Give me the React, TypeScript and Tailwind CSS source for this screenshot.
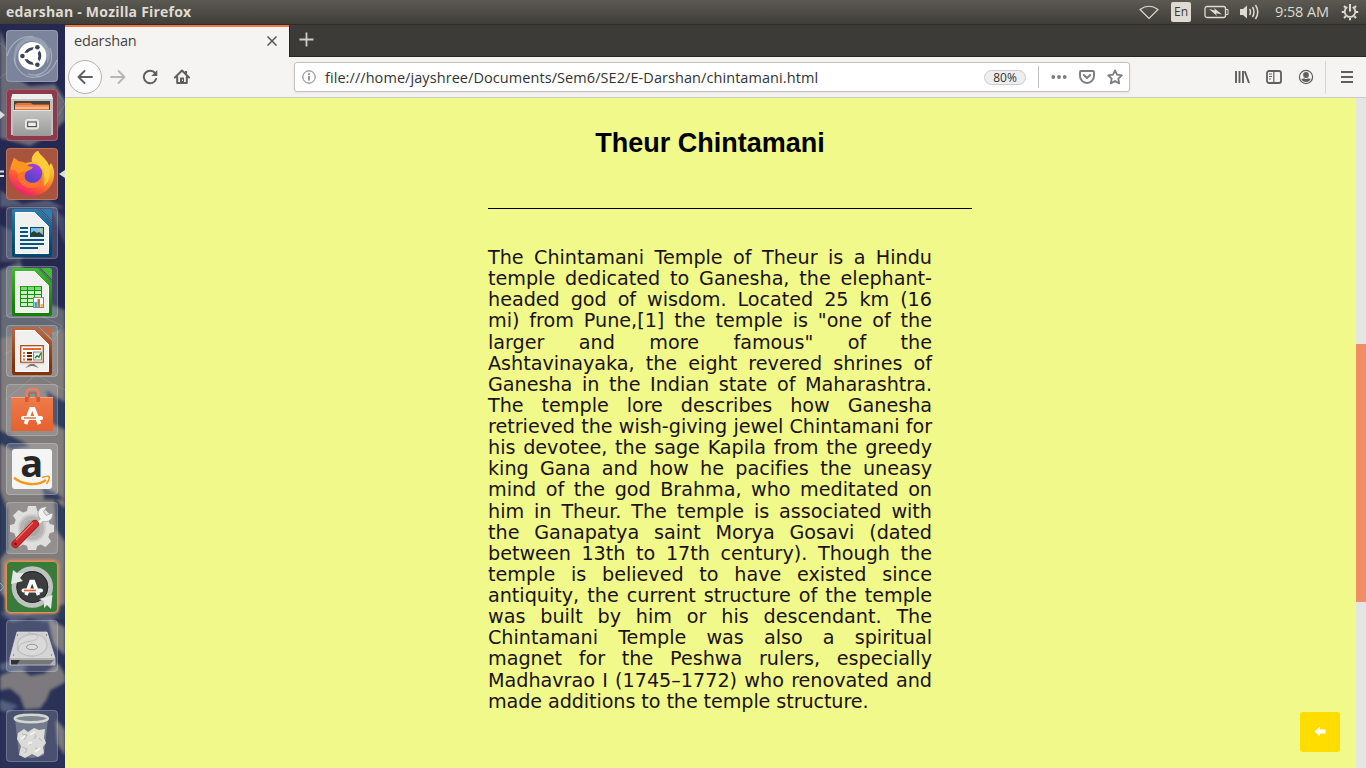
import React from "react";

const uiFont = "font-['Open_Sans','Noto_Sans',sans-serif]";

function Tile({ className, children }: { className: string; children: React.ReactNode }) {
  return (
    <div className={`h-[52px] w-[52px] shrink-0 rounded-[4px] ${className}`}>
      <svg className="overflow-visible" width="52" height="52" viewBox="0 0 52 52" fill="none">
        <rect x=".5" y=".5" width="51" height="51" rx="3.5" stroke="#fff" strokeOpacity=".2" />
        {children}
      </svg>
    </div>
  );
}

function Wallpaper() {
  return (
    <svg className="absolute inset-0" width="65" height="744" viewBox="0 24 65 744" preserveAspectRatio="none">
      <defs>
        <filter id="soft"><feGaussianBlur stdDeviation="1.4" /></filter>
      </defs>
      <rect y="24" width="65" height="744" fill="#25284f" />
      <g filter="url(#soft)">
        <path d="M0 30L8 50L15 78L30 86L55 84L65 100V120L50 135L30 146L0 138Z" fill="#676a78" />
        <path d="M0 190L22 204L48 200L65 208L0 207Z" fill="#535a74" />
        <path d="M0 225L30 240L20 262L0 262ZM50 205L65 218V245Z" fill="#454c69" />
        <path d="M0 270L20 262L38 300L65 310V345L0 350Z" fill="#646974" />
        <path d="M0 338L65 330V620H0Z" fill="#807b7c" />
        <path d="M0 430L20 440L30 446L12 450L0 444ZM46 390L65 402V430L52 424ZM0 490L8 510V550L0 560ZM54 498L65 508V542L56 530ZM0 592L25 614L65 604V625H0ZM42 486L58 494L65 500L44 500Z" fill="#2e3d5b" />
        <path d="M0 618H65V768H0Z" fill="#2b3359" />
        <path d="M0 676L20 668L30 676L44 674L58 664L65 675V682L50 690L46 700L40 708L25 709L20 696L10 688L0 690ZM48 618L65 628V655L54 644ZM56 720L65 730V755L58 744Z" fill="#7b7a7f" />
        <path d="M0 664L16 660L28 668L14 671L0 670ZM0 612L12 622L30 618L46 622L60 616M30 672L62 686M0 700L18 706L8 712L0 710Z" fill="#536080" />
      </g>
      <path d="M0 43L20 62L0 78M56 90L65 104L54 123M3 317L24 307L62 326M62 326L30 380M4 354L62 330M5 400L36 375L65 390" stroke="#b0b4bd" strokeWidth=".6" opacity=".45" fill="none" />
    </svg>
  );
}

function DocBase({ id, edge, light }: { id: string; edge: string; light: string }) {
  return (
    <>
      <defs><linearGradient id={id} x1="0" y1="0" x2="0" y2="1"><stop stopColor={light} /><stop offset=".8" stopColor={edge} /></linearGradient></defs>
      <path d="M8 2H32L46 16V48Q46 50 44 50H8Q6 50 6 48V4Q6 2 8 2Z" fill={`url(#${id})`} />
      <path d="M9.5 5.5H28.5L42.5 19.5V46.5H9.5Z" fill="#f0f0ef" stroke="#fff" />
      <path d="M34.5 2H44Q46 2 46 4V13.5Z" fill={light} />
      <path d="M33 2L46 15" stroke="#fff" strokeOpacity=".22" strokeWidth="1" />
    </>
  );
}

function Launcher() {
  return (
    <aside className="relative w-[65px] shrink-0 overflow-hidden">
      <Wallpaper />
      <div className="relative flex h-full flex-col items-start gap-[7px] pl-[6px] pt-[6px]">
        <Tile className="bg-[#7c849b]">
          <path d="M10 37C2 18 17 2 33 8C44 13 47 26 41 34C42 22 35 12 26 11C15 11 8 22 10 37Z" fill="#b0b6c6" opacity=".55" />
          <path d="M22 44C37 49 50 35 44 18M33 46C22 51 10 42 8 28M1 26C5 12 16 5 28 7M51 30C45 44 34 50 20 46" stroke="#b7bdcb" strokeWidth="1.2" opacity=".7" />
          <circle cx="26.3" cy="26" r="14" fill="#fff" />
          <circle cx="26.6" cy="26" r="7.2" stroke="#3b4354" strokeWidth="3" />
          <path d="M26.6 26L31 18.2M26.6 26L31 33.8M26.6 26H17" stroke="#fff" strokeWidth="6.4" />
          <circle cx="26.6" cy="26" r="5.7" fill="#fff" />
          <circle cx="16.4" cy="26" r="2.3" fill="#3b4354" /><circle cx="31.4" cy="17.2" r="2.3" fill="#3b4354" /><circle cx="31.4" cy="34.8" r="2.3" fill="#3b4354" />
        </Tile>
        <Tile className="bg-[#8d3b4c]">
          <defs><linearGradient id="cab" x1="0" y1="0" x2="0" y2="1"><stop stopColor="#c4c4c3" /><stop offset="1" stopColor="#9a9a99" /></linearGradient></defs>
          <path d="M6.5 5H45.5L47 10V46H5V10Z" fill="#c2c2c0" /><path d="M5 10L6.5 5H45.5L47 10Z" fill="#eeeeec" />
          <path d="M8 12H44V22H8Z" fill="#4b423b" />
          <path d="M9 15.5L11 14H25L27 15.5H43V21H9Z" fill="#e87331" /><path d="M9 19H43" stroke="#fff" /><path d="M9 17H43" stroke="#f5b684" />
          <path d="M7 21H45V47H7Z" fill="url(#cab)" /><path d="M7 21.5H45" stroke="#e5e5e5" />
          <rect x="19.5" y="30.5" width="13" height="9.5" rx="2" fill="#ddd" stroke="#ececec" /><rect x="21.7" y="33" width="8.6" height="4.6" fill="#eee" stroke="#444" />
        </Tile>
        <Tile className="bg-[#a9543f]">
          <defs>
            <linearGradient id="fox" x1=".85" y1=".05" x2=".3" y2="1"><stop stopColor="#ffee53" /><stop offset=".45" stopColor="#ff9b24" /><stop offset=".75" stopColor="#ff503b" /><stop offset="1" stopColor="#e81a7a" /></linearGradient>
            <linearGradient id="glb" x1=".7" y1="0" x2=".2" y2="1"><stop stopColor="#a13fe3" /><stop offset="1" stopColor="#4a42c4" /></linearGradient>
          </defs>
          <path d="M5 18L8 10L13 13.5L20 15C22 14 24 14 26 14C25 9 28 5 32 3C34 8 41 11 43 18L45 15C50 23 49 33 43 40C35 50 17 50 9 40C3 33 1 25 5 18Z" fill="url(#fox)" />
          <circle cx="26.5" cy="25.5" r="9.8" fill="url(#glb)" />
          <path d="M26 14C25 9 28 5 32 3C34 8 41 11 43 18C46 26 43 34 38 38C39 32 39 24 35 19C33 15 29 14 26 14Z" fill="#ffcb38" />
          <path d="M8 10L13 13.5C17 13 20 15 22 18L27 19C26 22 22 22 20 24C17 27 18 33 24 34.5C19 36 13 32 12 26C11 23 9 21 5 22V18Z" fill="#ff9420" />
          <path d="M20 24C17 27 18 33 24 34.5C30 36 35 32 36 27C38 33 34 40 26 40C17 40 11 33 12 26C14 24 17 23 20 24Z" fill="#ff7032" />
        </Tile>
        <Tile className="bg-white/15">
          <DocBase id="docBlue" edge="#02486f" light="#2b7fb1" />
          <path d="M14 21H22M14 25H22M14 29H22M14 33H38M14 37H38M14 41H32" stroke="#07557e" strokeWidth="2" />
          <rect x="24.5" y="20.5" width="13" height="9" fill="#72c4e8" stroke="#084b70" /><path d="M25 29V26L28 24L31 26L33 25L37 28V29Z" fill="#323c31" /><circle cx="35" cy="23" r="1.5" fill="#f5c421" />
        </Tile>
        <Tile className="bg-white/15">
          <DocBase id="docGreen" edge="#118202" light="#43b934" />
          <rect x="14.5" y="20.5" width="21" height="20" fill="#caf3c2" stroke="#168e0d" /><path d="M15 22.3H35" stroke="#77dc6f" strokeWidth="3" /><path d="M14 24.5H36M14 28.5H36M14 32.5H36M14 36.5H36M21.5 21V41M28.5 21V41" stroke="#168e0d" />
          <rect x="27.5" y="31.5" width="10" height="10" fill="#fff" stroke="#888" /><path d="M29.7 36V41" stroke="#28a5de" strokeWidth="2.5" /><path d="M32.7 33V41" stroke="#da602d" strokeWidth="2.5" /><path d="M35.7 38V41" stroke="#f1b52c" strokeWidth="2.2" />
        </Tile>
        <Tile className="bg-white/15">
          <DocBase id="docRust" edge="#883007" light="#bd6a44" />
          <rect x="14.7" y="20.7" width="22.6" height="16.6" fill="#fff" stroke="#b24916" strokeWidth="1.3" /><path d="M17 24H35" stroke="#dc6c31" strokeWidth="2" /><path d="M17 28H19M17 31H19M17 34.5H19" stroke="#e1793d" strokeWidth="2" /><path d="M21 28H26M21 31H26M21 34.5H26" stroke="#68250a" strokeWidth="2" /><rect x="27.5" y="27" width="8" height="8" fill="#eee" stroke="#888" /><path d="M29 33L31 31L33 32L35 28" stroke="#15912a" strokeWidth="1.5" /><path d="M14 38.5H38" stroke="#d5d5d5" strokeWidth="1.5" /><path d="M24 39L19 43L25 41H27L33 43L28 39Z" fill="#777" />
        </Tile>
        <Tile className="bg-white/15">
          <defs><linearGradient id="bag" x1="0" y1="0" x2="0" y2="1"><stop stopColor="#ef7a4a" /><stop offset="1" stopColor="#e6622e" /></linearGradient></defs>
          <path d="M5 13H47V47H5Z" fill="url(#bag)" /><path d="M5 13.5H47" stroke="#f8a27e" />
          <path d="M20.5 17V9Q21 5 25 5H28Q32 5 32.5 9V17" stroke="#e8805c" strokeWidth="2.4" /><path d="M23 14V9H30V14" stroke="#bd5435" strokeWidth="1" /><rect x="19" y="13" width="3.5" height="5" fill="#d75832" /><rect x="30.5" y="13" width="3.5" height="5" fill="#d75832" />
          <path d="M19.5 40L25 25H27.6L33.5 40" stroke="#fff" strokeWidth="3.8" /><path d="M17 34H35" stroke="#fff" strokeWidth="4.2" strokeLinecap="round" /><path d="M18 34H30" stroke="#e96331" strokeWidth="1.4" />
        </Tile>
        <Tile className="bg-white/20">
          <rect x="6" y="6" width="40" height="40" rx="3" fill="#f5f5f5" />
          <text x="25.7" y="34" textAnchor="middle" fontFamily="Open Sans, sans-serif" fontWeight="700" fontSize="38" fill="#262626">a</text>
          <path d="M8 34.8C17 42 31 43.5 40 37" stroke="#f59a16" strokeWidth="2.4" /><path d="M36 34.5C40 33 43.5 32.5 43.3 34.5C43.3 37 42 39 40.5 41" stroke="#f59a16" strokeWidth="1.6" />
        </Tile>
        <Tile className="bg-white/15">
          <path d="M22 4H30L31.2 9L35 10.5L39.5 8L45 13.5L42.3 18L43.8 22L48 23V30L43.8 31L42.3 35L45 39.5L39.5 45L35 42.5L31.2 44L30 48H22L21 44L17 42.5L12.5 45L7 39.5L9.8 35L8.2 31L4 30V23L8.2 22L9.8 18L7 13.5L12.5 8L17 10.5L21 9Z" fill="#dfdfde" />
          <circle cx="26" cy="26" r="13" fill="#b6b5b4" stroke="#cbcbca" strokeWidth="2" /><circle cx="26" cy="26" r="8" fill="#a9a6a5" />
          <path d="M26 27L37 15" stroke="#bababa" strokeWidth="5" /><path d="M34.5 17C29 11 33 4 41 5L37.5 9.5L40 13.5L46.5 11C47.5 17 42 21 37 19.5L33 23L30 20Z" fill="#f1f1f1" stroke="#999" strokeWidth=".7" />
          <path d="M9.5 42L29 22" stroke="#9e1718" strokeWidth="8" strokeLinecap="round" /><path d="M9.5 42L29 22" stroke="#cf2b2b" strokeWidth="6.4" strokeLinecap="round" /><path d="M10 38L27 20.5" stroke="#ed7c73" strokeWidth="1.2" /><circle cx="9.5" cy="42" r="1.3" fill="#7d1212" />
        </Tile>
        <Tile className="bg-[#387b3a] shadow-[0_0_3px_1px_#ef965d]">
          <rect x=".5" y=".5" width="51" height="51" rx="3.5" stroke="#dd9159" />
          <circle cx="26.3" cy="26" r="18.3" fill="#3c3e3e" stroke="#bfc2bf" strokeWidth="4.8" /><circle cx="26.3" cy="26" r="15.5" stroke="#262929" />
          <path d="M5 23L7 9L11 12L18 12L14 17L17 20ZM33 38L46.5 34L45 48L41 44L38 47L38 40Z" fill="#e4e8e4" />
          <path d="M20 34L25 20.5H27.3L32.5 34" stroke="#fff" strokeWidth="3.6" /><path d="M17.5 29.5H35" stroke="#fff" strokeWidth="4" strokeLinecap="round" /><path d="M18 29.5H30" stroke="#ec632d" strokeWidth="1.7" />
        </Tile>
        <Tile className="bg-white/15">
          <defs><linearGradient id="disk" x1="0" y1="0" x2="0" y2="1"><stop stopColor="#cfcfcf" /><stop offset="1" stopColor="#d8d8d8" /></linearGradient></defs>
          <path d="M11 12H41L49 38V45H4V38Z" fill="url(#disk)" stroke="#e4e4e4" strokeWidth=".7" /><path d="M4 38H49V45H4Z" fill="#b5b5b5" /><path d="M5 40H16L11 44.5H5Z" fill="#333" /><path d="M14 40H48L44 44.5H11Z" fill="#777" />
          <path d="M12 26C9 16 30 10 38 18C47 29 34 37 24 36C14 35 10 29 12 26Z" fill="#d9d9d9" stroke="#b6b6b6" /><path d="M22 13C34 14 35 19 25 21C16 22 12 25 12 31" stroke="#bbb" /><ellipse cx="26" cy="27" rx="5.5" ry="2.7" fill="#ddd" stroke="#999" /><path d="M11 15H12M40 15H41M7 35H8M45 35H46" stroke="#777" strokeWidth="1.5" />
        </Tile>
        <div className="h-6 shrink-0" />
        <Tile className="bg-white/15">
          <path d="M9 9L13 45Q26 51 38 45L42 9Z" fill="#8f98a4" opacity=".6" />
          <path d="M12 23L18 19L22 22L28 18L33 20L39 19L38 28L40 33L37 37L38 43L32 47L26 44L19 48L13 45L15 36L11 29Z" fill="#dbdbd8" />
          <path d="M16 24L21 25L18 30M27 22L30 26L28 29M33 28L36 31M16 37L21 39L19 43M29 38L33 39M22 33L25 35" stroke="#b7b8b4" strokeWidth="1" /><path d="M15 29L19 26M24 25L29 22M22 34L26 32M29 42L34 38" stroke="#f2f2ef" strokeWidth="2" />
          <ellipse cx="25.3" cy="8.5" rx="16.5" ry="3.8" fill="#7f8890" stroke="#d3d5d1" strokeWidth="2.6" />
        </Tile>
      </div>
      <svg className="absolute inset-0" width="65" height="744" viewBox="0 24 65 744">
        <path d="M0 111V119L5 115Z" fill="#ddd" /><path d="M0 171.5H4M0 176H4" stroke="#ddd" strokeWidth="2" /><path d="M65 170V178L59 174Z" fill="#ddd" /><path d="M0 583L4 587L0 591" fill="none" stroke="#60bad9" />
      </svg>
    </aside>
  );
}

function TopBar() {
  return (
    <header className={`flex h-6 shrink-0 items-center bg-linear-to-b from-[#5b5952] to-[#403e39] text-[#dfdbd2] ${uiFont}`}>
      <span className="w-[300px] pl-[6px] text-[14px] leading-6 font-bold tracking-[0.21px]">edarshan - Mozilla Firefox</span>
      <svg className="ml-auto" width="20" height="16" viewBox="0 0 20 16" fill="none"><path d="M1 5.5Q10 -1 19 5.5L10 14.5Z" stroke="#dfdbd2" strokeWidth="1.1" /></svg>
      <span className="ml-3 flex h-5 w-5 items-center justify-center rounded-[2px] bg-[#dfdbd2] text-[12px] text-[#3c3b37]">En</span>
      <svg className="ml-[13px]" width="25" height="14" viewBox="0 0 25 14" fill="none"><rect x="1" y="1.5" width="20.5" height="11" rx="2" stroke="#dfdbd2" strokeWidth="1.3" /><path d="M22 4.5H24V9.5H22" stroke="#dfdbd2" /><path d="M5 4L11 5.5L10 3L18 9.5L12 8.3L13 11Z" fill="#dfdbd2" /></svg>
      <svg className="ml-[11px]" width="20" height="18" viewBox="0 0 20 18" fill="none"><path d="M0 6H3L7 2.5V15.5L3 12H0Z" fill="#dfdbd2" /><path d="M9.5 6Q11.5 9 9.5 12M12.5 4Q15.5 9 12.5 14M15.5 2Q20 9 15.5 16" stroke="#dfdbd2" strokeWidth="1.5" /></svg>
      <span className="ml-[15px] w-[54px] whitespace-nowrap text-[14.5px] leading-6 tracking-[-0.1px]">9:58 AM</span>
      <svg className="ml-[12px] mr-[7px]" width="18" height="18" viewBox="0 0 18 18" fill="none" stroke="#dfdbd2"><path d="M6.3 4.1A5.3 5.3 0 1 0 11.7 4.1" strokeWidth="1.8" /><path d="M9 1V8.5" strokeWidth="2" /><path d="M3 9H.8M17.2 9H15M9 15V17.2M4.7 13.3L3 15M13.3 13.3L15 15M4.7 4.7L3 3M13.3 4.7L15 3" strokeWidth="2" /></svg>
    </header>
  );
}

function Tabs() {
  return (
    <div className={`flex h-[33px] shrink-0 border-b border-t border-b-[#26262a] border-t-[#2f2e2c] bg-[#3c3b37] ${uiFont}`}>
      <div className="-mb-px flex w-[224px] items-center border-t-2 border-[#f07746] bg-[#f5f4f3] pl-[9px] pr-3 text-[#444]">
        <span className="-mt-[2px] text-[14.5px] tracking-[-0.15px]">edarshan</span>
        <svg className="-mt-[3px] ml-auto" width="10" height="10" viewBox="0 0 10 10" stroke="#555" strokeWidth="1.5"><path d="M.5 .5L9.5 9.5M9.5 .5L.5 9.5" /></svg>
      </div>
      <div className="flex items-center border-l border-[#25242b] pl-[9px]">
        <svg className="-mt-[2px]" width="15" height="15" viewBox="0 0 15 15" stroke="#d0cec9" strokeWidth="1.8"><path d="M.5 7.5H14.5M7.5 .5V14.5" /></svg>
      </div>
    </div>
  );
}

function Toolbar() {
  return (
    <div className={`flex h-[41px] shrink-0 items-center border-b border-[#c9c9c7] bg-[#f5f4f3] ${uiFont}`}>
      <div className="ml-[3px] flex h-[34px] w-[34px] items-center justify-center rounded-full border border-[#b3b2b1] bg-[#fcfcfc]">
        <svg width="16" height="16" viewBox="0 0 16 16" fill="none" stroke="#5f5f5f" strokeWidth="1.9" strokeLinecap="round" strokeLinejoin="round"><path d="M15 8H1.5M7.5 2L1.5 8L7.5 14" /></svg>
      </div>
      <svg className="ml-2" width="16" height="16" viewBox="0 0 16 16" fill="none" stroke="#b7b7b6" strokeWidth="1.9" strokeLinecap="round" strokeLinejoin="round"><path d="M1 8H14.5M8.5 2L14.5 8L8.5 14" /></svg>
      <svg className="ml-4" width="16" height="16" viewBox="0 0 16 16" fill="none"><path d="M13.2 4.2A6.3 6.3 0 1 0 14.1 10" stroke="#5f5f5f" strokeWidth="2" strokeLinecap="round" /><path d="M15.3 1V7H9.3Z" fill="#5f5f5f" /></svg>
      <svg className="ml-4" width="16" height="16" viewBox="0 0 16 16" fill="none"><path d="M1 8.5L8 1.5L15 8.5M3.2 8V14H12.8V8" stroke="#5f5f5f" strokeWidth="2" strokeLinecap="round" strokeLinejoin="round" /><path d="M12 2V5" stroke="#5f5f5f" strokeWidth="2" /><path d="M6 8.5H10V14H6Z" fill="#5f5f5f" /><path d="M8.5 10.5V12" stroke="#eee" /></svg>
      <div className="ml-[104px] flex h-[30px] w-[836px] shrink-0 items-center rounded-[3px] border border-[#c4c2bf] bg-white shadow-[0_1px_3px_rgba(0,0,0,0.06)]">
        <svg className="ml-[7px]" width="14" height="14" viewBox="0 0 14 14" fill="none" stroke="#777"><circle cx="7" cy="7" r="6.2" /><path d="M7 6V10.5M7 3.2V5" strokeWidth="1.5" /></svg>
        <span className="ml-[9px] w-[659px] whitespace-nowrap pt-[2px] text-[14.5px] tracking-[0.07px] text-[#333]">file:///home/jayshree/Documents/Sem6/SE2/E-Darshan/chintamani.html</span>
        <span className="flex h-[15px] w-[42px] items-center justify-center rounded-full border border-[#ccc] bg-[#eee] pt-px text-[12px] text-[#333]">80%</span>
        <span className="ml-3 h-[22px] w-px bg-[#c2c2c2]" />
        <svg className="ml-3" width="17" height="16" viewBox="0 0 17 16" fill="#7c7c7c"><circle cx="2.3" cy="8" r="1.9" /><circle cx="8" cy="8" r="1.9" /><circle cx="13.7" cy="8" r="1.9" /></svg>
        <svg className="ml-[11px]" width="16" height="16" viewBox="0 0 16 16" fill="none" stroke="#7c7c7c" strokeWidth="1.9" strokeLinecap="round" strokeLinejoin="round"><path d="M2 2H14Q15 2 15 3V7A7 7 0 0 1 1 7V3Q1 2 2 2Z" /><path d="M4.8 6L8 9L11.2 6" /></svg>
        <svg className="ml-3" width="16" height="16" viewBox="0 0 16 16" fill="none" stroke="#7c7c7c" strokeWidth="1.8" strokeLinejoin="round"><path d="M8 1.4L10 5.7L14.8 6.3L11.3 9.6L12.2 14.4L8 12L3.8 14.4L4.7 9.6L1.2 6.3L6 5.7Z" /></svg>
      </div>
      <svg className="ml-[104px]" width="16" height="16" viewBox="0 0 16 16" fill="none" stroke="#5f5f5f" strokeWidth="1.9"><path d="M2 2V14M5.5 2V14M9 2V14M10.8 2.2L15 14" /></svg>
      <svg className="ml-4" width="16" height="16" viewBox="0 0 16 16" fill="none" stroke="#5f5f5f" strokeWidth="1.8"><rect x="1" y="2" width="14" height="12" rx="2" /><path d="M7.8 2V14" strokeWidth="1.2" /><path d="M3 5H6M3 7.5H6M3 10H5" strokeWidth="1" /></svg>
      <svg className="ml-4" width="16" height="16" viewBox="0 0 16 16" fill="none"><circle cx="8" cy="8" r="6.6" stroke="#5f5f5f" strokeWidth="1.2" /><circle cx="8" cy="6" r="2.9" fill="#5f5f5f" /><path d="M3.3 9.8Q5.3 9.8 6 9.2Q8 10.7 10 9.2Q10.7 9.8 12.7 9.8Q11.5 13 8 13Q4.5 13 3.3 9.8Z" fill="#5f5f5f" /></svg>
      <span className="ml-[11px] h-[33px] w-px bg-[#d8d7d6]" />
      <svg className="ml-[13px]" width="16" height="16" viewBox="0 0 16 16" stroke="#5f5f5f" strokeWidth="2"><path d="M2 3H14M2 8H14M2 13H14" /></svg>
    </div>
  );
}

function Page() {
  return (
    <div className="relative flex min-h-0 flex-1 bg-[#f0f989]">
      <main className="flex-1 pl-[423px] pt-[27px]">
        <div className="w-[444px]">
          <h1 className="text-center font-['Liberation_Sans',sans-serif] text-[27px] leading-9 font-bold text-black">Theur Chintamani</h1>
          <div className="mt-[47px] h-px w-[484px] bg-black" />
          <p className="mt-[38px] text-justify font-['DejaVu_Sans',sans-serif] text-[19.2px] leading-[21.12px] tracking-[-0.025px] text-[#1c1219]">
            The Chintamani Temple of Theur is a Hindu temple dedicated to Ganesha, the elephant-headed god of wisdom. Located 25 km (16 mi) from Pune,[1] the temple is "one of the larger and more famous" of the Ashtavinayaka, the eight revered shrines of Ganesha in the Indian state of Maharashtra. The temple lore describes how Ganesha retrieved the wish-giving jewel Chintamani for his devotee, the sage Kapila from the greedy king Gana and how he pacifies the uneasy mind of the god Brahma, who meditated on him in Theur. The temple is associated with the Ganapatya saint Morya Gosavi (dated between 13th to 17th century). Though the temple is believed to have existed since antiquity, the current structure of the temple was built by him or his descendant. The Chintamani Temple was also a spiritual magnet for the Peshwa rulers, especially Madhavrao I (1745–1772) who renovated and <span className="tracking-[-0.1px]">made additions to the temple structure.</span>
          </p>
        </div>
      </main>
      <div className="w-[10px] bg-[#e5e5e5] pt-[246px]"><div className="h-[258px] bg-[#f08c66]" /></div>
      <button className="absolute bottom-4 right-[26px] flex h-10 w-10 items-center justify-center rounded-[3px] bg-[#ffdd00]">
        <svg width="12" height="12" viewBox="0 0 12 12" fill="#fff"><path d="M.5 5.5L6 .5V3.5H11.5V7.5H6V10.5Z" /></svg>
      </button>
    </div>
  );
}

export default function App() {
  return (
    <div className="flex h-screen w-full flex-col overflow-hidden bg-[#26284b]">
      <TopBar />
      <div className="flex min-h-0 flex-1">
        <Launcher />
        <section className="flex min-w-0 flex-1 flex-col">
          <Tabs />
          <Toolbar />
          <Page />
        </section>
      </div>
    </div>
  );
}
